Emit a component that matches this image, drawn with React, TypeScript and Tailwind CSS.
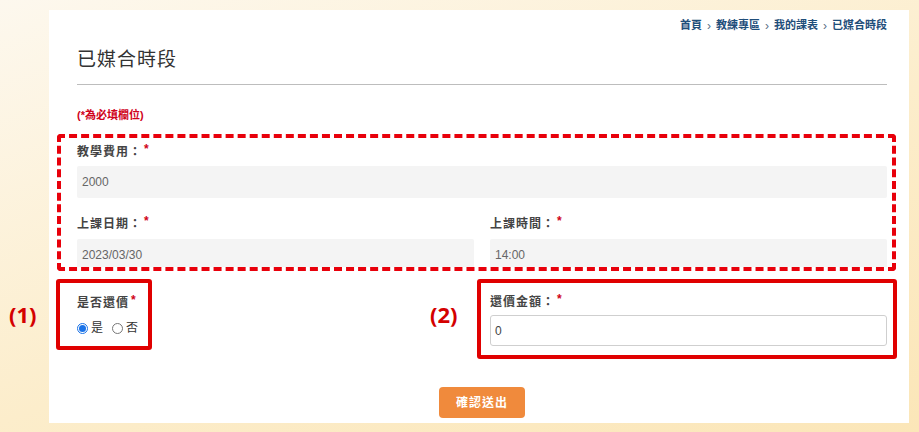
import React from 'react';

const font = { fontFamily: '"Liberation Sans", "Noto Sans CJK TC", sans-serif' };

const Label = ({ text, colon = true }: { text: string; colon?: boolean }) => (
  <div className="h-[16px] text-[12px] leading-[16px] font-bold text-[#444] tracking-[1px]">
    {text}
    {colon && '：'}
    <span className="text-[#d0021b] ml-[2px] relative -top-[3px]">*</span>
  </div>
);

const Radio = ({ checked, label }: { checked?: boolean; label: string }) => (
  <label className="flex items-center gap-[3px] text-[12px] text-[#333]">
    {checked ? (
      <span className="w-[11px] h-[11px] rounded-full border border-[#1a73e8] bg-white flex items-center justify-center">
        <span className="w-[7px] h-[7px] rounded-full bg-[#1a73e8]" />
      </span>
    ) : (
      <span className="w-[11px] h-[11px] rounded-full border border-[#777] bg-white" />
    )}
    <span>{label}</span>
  </label>
);

export default function App() {
  const crumbs = ['首頁', '教練專區', '我的課表', '已媒合時段'];

  return (
    <div
      style={font}
      className="h-[432px] w-[919px] bg-[linear-gradient(160deg,#fdf8ee_0%,#fcedcb_55%,#fbe6b8_100%)] pl-[49px] pr-[10px] pt-[10px] pb-[9px]"
    >
      <div className="h-full bg-white pl-[28px] pr-[22px] flex flex-col">
        {/* breadcrumb */}
        <div className="flex justify-end items-center gap-[5px] pt-[7px] h-[24px] text-[11px] font-bold text-[#1f4e7a]">
          {crumbs.map((c, i) => (
            <React.Fragment key={c}>
              {i > 0 && <span className="text-[#5a6f86] font-normal text-[12px]">›</span>}
              <span>{c}</span>
            </React.Fragment>
          ))}
        </div>

        <h1 className="mt-[13px] text-[19px] leading-[26px] text-[#333] tracking-[1px]">已媒合時段</h1>
        <div className="mt-[11px] h-px bg-[#bdbdbd]" />

        <p className="mt-[23px] text-[11px] leading-[14px] font-bold text-[#d0021b]">(*為必填欄位)</p>

        {/* dashed group */}
        <div className="mt-[12px] -ml-[20px] -mr-[9px] border-[4px] border-dashed border-[#e8000b] rounded-[4px] pl-[16px] pr-[5px] pt-[6px]">
          <Label text="教學費用" />
          <div className="mt-[6px] h-[32px] bg-[#f4f4f4] rounded-[2px] px-[5px] flex items-center text-[12px] text-[#666]">2000</div>
          <div className="grid grid-cols-2 gap-x-[16px] mt-[18px]">
            <div>
              <Label text="上課日期" />
              <div className="mt-[7px] h-[28px] bg-[#f4f4f4] rounded-t-[2px] px-[5px] pt-[4px] flex items-center text-[12px] text-[#666]">2023/03/30</div>
            </div>
            <div>
              <Label text="上課時間" />
              <div className="mt-[7px] h-[28px] bg-[#f4f4f4] rounded-t-[2px] px-[5px] pt-[4px] flex items-center text-[12px] text-[#666]">14:00</div>
            </div>
          </div>
        </div>

        {/* bargain row */}
        <div className="relative mt-[8px] flex items-start -ml-[21px] -mr-[10px]">
          <span className="absolute -left-[47px] top-[20px] text-[22px] leading-[30px] font-bold text-[#d40000]" style={{ fontFamily: '"Open Sans", sans-serif' }}>(1)</span>
          <div className="w-[96px] h-[71px] border-[4px] border-[#e00000] rounded-[3px] pl-[17px] pt-[12px]">
            <Label text="是否還價" colon={false} />
            <div className="mt-[8px] flex items-center gap-[9px]">
              <Radio checked label="是" />
              <Radio label="否" />
            </div>
          </div>
          <span className="absolute left-[374px] top-[20px] text-[22px] leading-[30px] font-bold text-[#d40000]" style={{ fontFamily: '"Open Sans", sans-serif' }}>(2)</span>
          <div className="ml-auto w-[420px] h-[80px] border-[4px] border-[#e00000] rounded-[3px] pl-[9px] pr-[6px] pt-[11px]">
            <Label text="還價金額" />
            <div className="mt-[5px] h-[31px] border border-[#cfcfcf] rounded-[3px] px-[4px] flex items-center text-[12px] text-[#444] bg-white">0</div>
          </div>
        </div>

        <div className="flex justify-center mt-[28px]">
          <button className="w-[86px] h-[31px] rounded-[4px] bg-[#f08a3c] text-white text-[12px] font-bold tracking-[1px]">確認送出</button>
        </div>
      </div>
    </div>
  );
}
